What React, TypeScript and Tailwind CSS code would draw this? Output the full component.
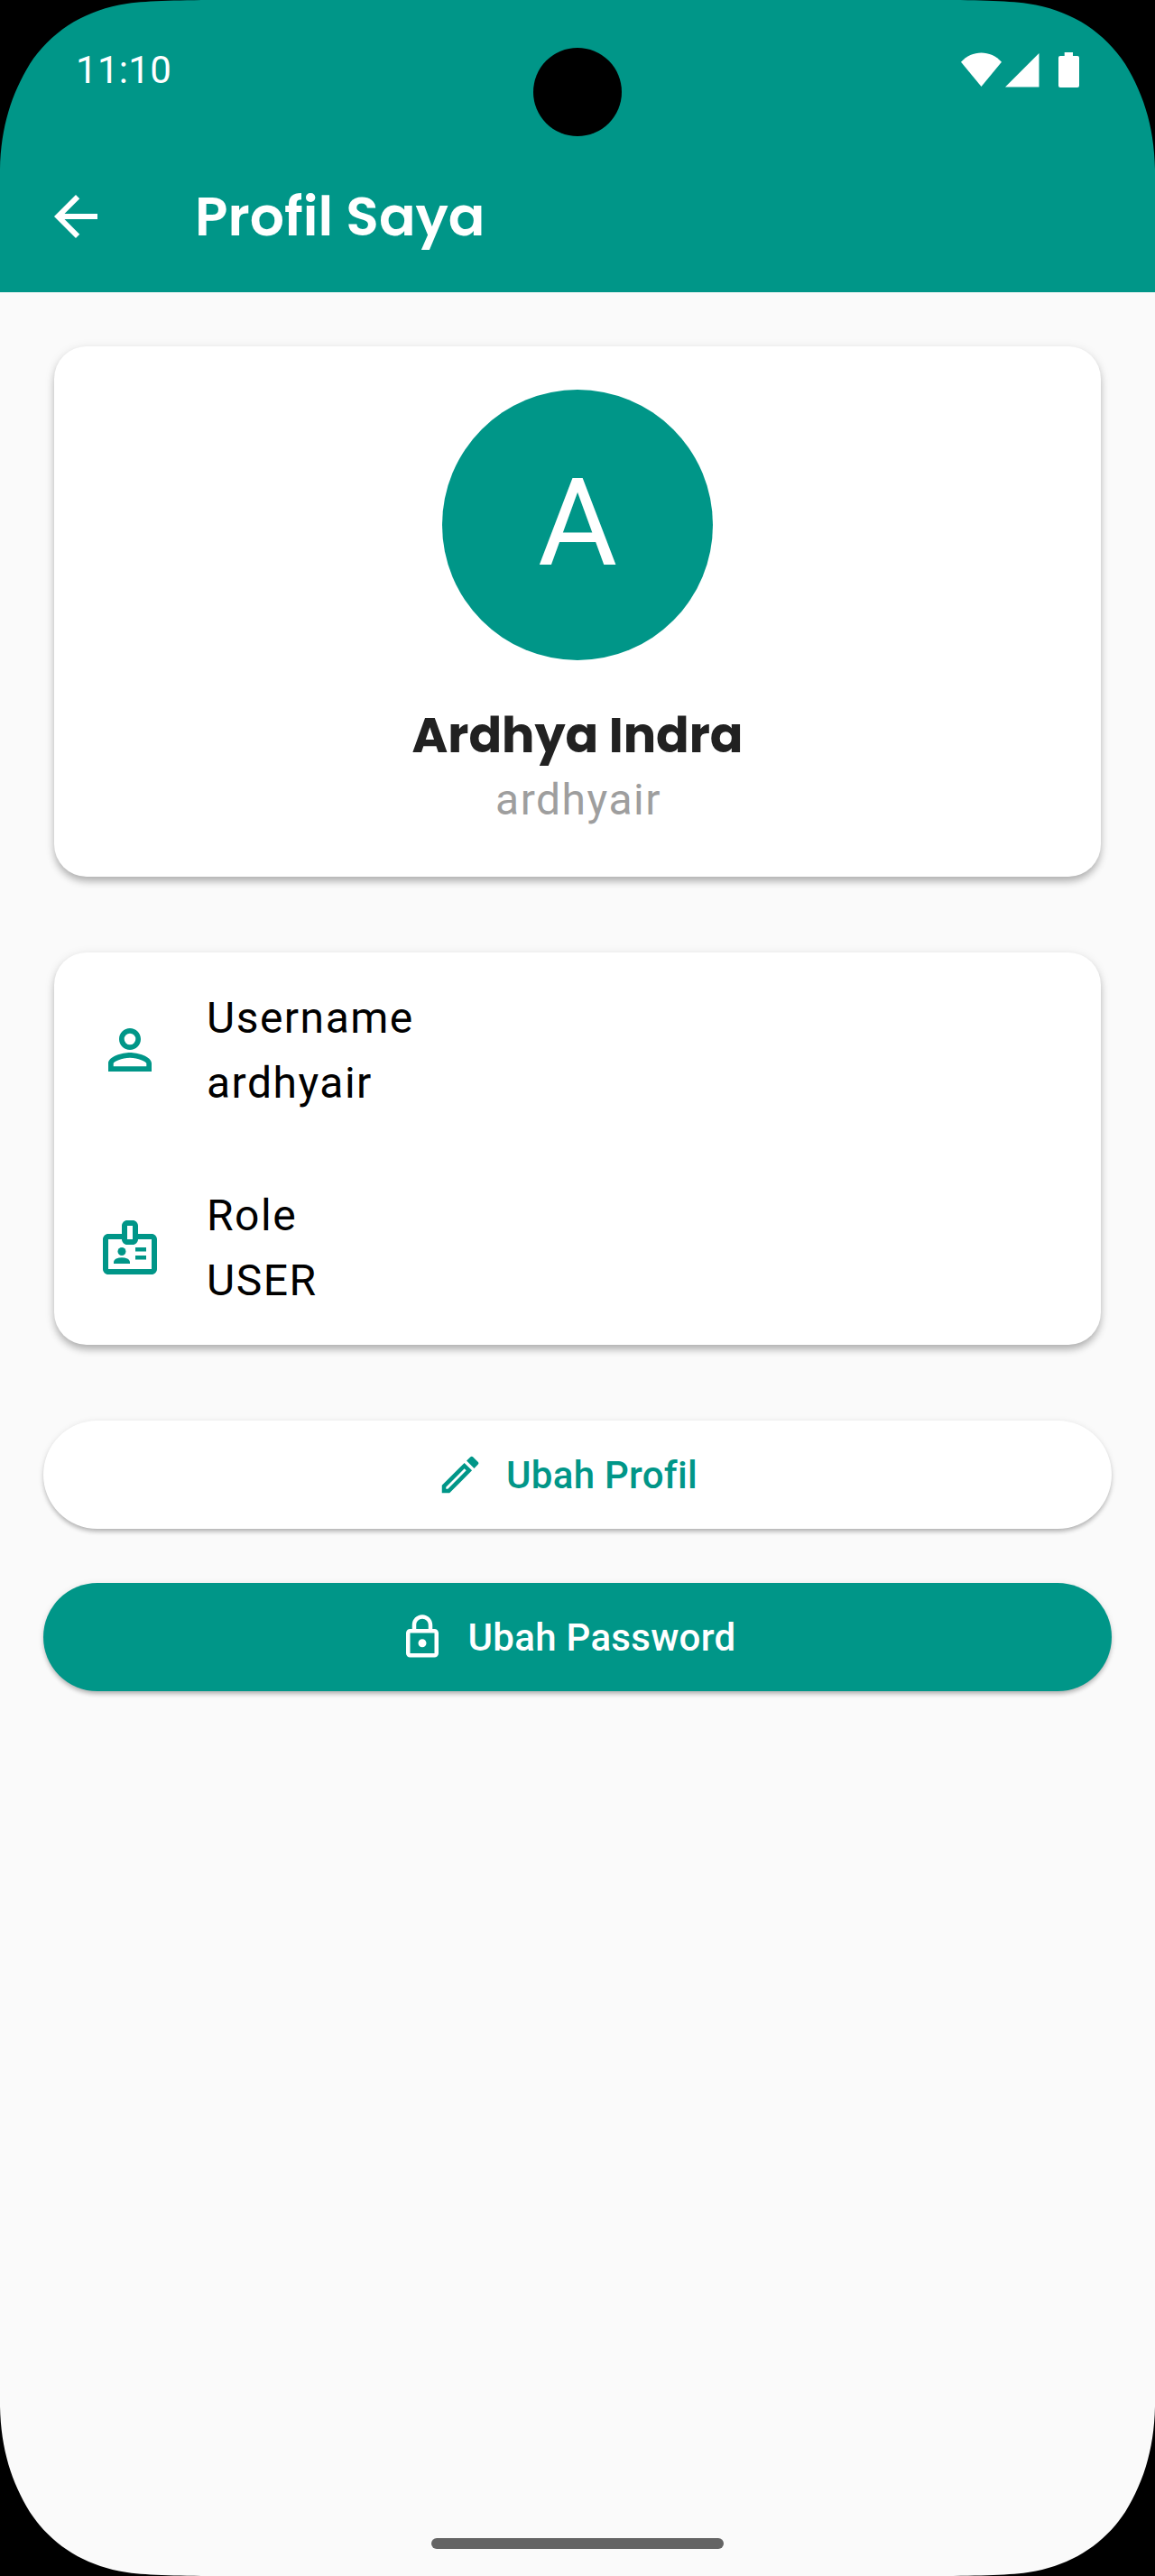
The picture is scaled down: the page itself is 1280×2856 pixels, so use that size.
import type { ReactNode } from "react";
import { MdArrowBack, MdOutlineBadge, MdOutlineEdit, MdOutlineLock, MdPersonOutline } from "react-icons/md";

const cardShadow = "shadow-[0_6px_8px_-1px_rgba(0,0,0,0.25),0_2px_12px_rgba(0,0,0,0.10)]";
const buttonShadow = "shadow-[0_4px_5px_-1px_rgba(0,0,0,0.24),0_1px_7px_rgba(0,0,0,0.10)]";
const display = "font-['Poppins','Inter',sans-serif]";

const corner = "M0 0H232C185 0.5 155 1 132 5.500C90 14 56 36 33 71C13 104 1 140 0 188Z";

function Corner({ className }: { className: string }) {
  return (
    <svg className={`absolute h-[190px] w-[234px] ${className}`} viewBox="0 0 234 190" fill="#000">
      <path d={corner} />
    </svg>
  );
}

function StatusIcons() {
  return (
    <svg className="h-[42px] w-[134px]" viewBox="0 0 134 42" fill="#fff">
      <path d="M0 12.800C12-1 33-1 45 12.800L22.500 40Z" />
      <path d="M86.500 3V40.500H49Z" />
      <path d="M114.700 2h9.300v4h5a2 2 0 0 1 2 2v31a2 2 0 0 1-2 2h-19a2 2 0 0 1-2-2v-31a2 2 0 0 1 2-2h4.700z" />
    </svg>
  );
}

function Row({ icon, label, value }: { icon: ReactNode; label: string; value: string }) {
  return (
    <div className="flex h-36 items-center gap-[49px]">
      <span className="text-[72px] text-[#009688]">{icon}</span>
      <div className="pt-0.5 text-[48px] leading-[72px] tracking-[1.5px] text-black">
        <p>{label}</p>
        <p>{value}</p>
      </div>
    </div>
  );
}

export default function App() {
  return (
    <div className="relative flex h-[2856px] w-[1280px] flex-col overflow-hidden bg-[#fafafa] font-['Roboto',sans-serif]">
      <header className="h-[324px] bg-[#009688] text-white">
        <div className="flex h-[156px] items-start justify-between pl-[84px] pr-[81px]">
          <span className="mt-[53px] text-[42px] leading-[50px] tracking-[0.3px]">11:10</span>
          <span className="mt-14">
            <StatusIcons />
          </span>
        </div>
        <div className="flex h-[168px] items-center pl-12">
          <MdArrowBack className="size-[72px]" />
          <h1 className={`ml-24 text-[60px] leading-[90px] font-semibold ${display}`}>Profil Saya</h1>
        </div>
      </header>

      <main className="flex flex-1 flex-col px-12 pt-[60px]">
        <section className={`mx-3 flex h-[588px] flex-col items-center rounded-[36px] bg-white pt-12 ${cardShadow}`}>
          <div className="flex size-[300px] items-center justify-center rounded-full bg-[#009688] pb-[3px] text-[135px] text-white">
            A
          </div>
          <h2 className={`mt-[43px] text-[54px] leading-[81px] font-bold text-[#212121] ${display}`}>Ardhya Indra</h2>
          <p className="-mt-[5px] pl-0.5 text-[48px] leading-[72px] tracking-[1.5px] text-[#9e9e9e]">ardhyair</p>
        </section>

        <section className={`mx-3 mt-[84px] flex h-[435px] flex-col justify-between rounded-[36px] bg-white px-12 py-9 ${cardShadow}`}>
          <Row icon={<MdPersonOutline />} label="Username" value="ardhyair" />
          <Row icon={<MdOutlineBadge />} label="Role" value="USER" />
        </section>

        <button className={`mt-[84px] flex h-[120px] items-center justify-center gap-6 rounded-full bg-white pr-6 text-[42px] font-medium tracking-[0.3px] text-[#009688] ${buttonShadow}`}>
          <MdOutlineEdit className="size-[54px]" />
          Ubah Profil
        </button>
        <button className={`mt-[60px] flex h-[120px] items-center justify-center gap-6 rounded-full bg-[#009688] pr-6 text-[42px] font-medium tracking-[0.3px] text-white ${buttonShadow}`}>
          <MdOutlineLock className="size-[54px]" />
          Ubah Password
        </button>
      </main>

      <div className="mb-[30px] h-3 w-[324px] self-center rounded-full bg-[#646464]" />

      <div className="absolute left-[591px] top-[53px] size-[98px] rounded-full bg-black" />
      <Corner className="left-0 top-0" />
      <Corner className="right-0 top-0 -scale-x-100" />
      <Corner className="bottom-0 left-0 -scale-y-100" />
      <Corner className="bottom-0 right-0 -scale-100" />
    </div>
  );
}
